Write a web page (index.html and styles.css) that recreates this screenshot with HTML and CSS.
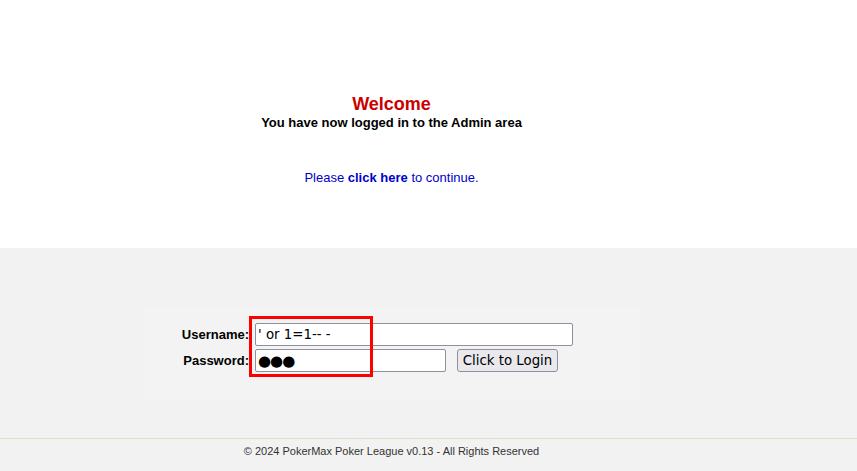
FILE: index.html
```html
<!DOCTYPE html>
<html>
<head>
<meta charset="utf-8">
<title>PokerMax Poker League</title>
<link rel="stylesheet" href="styles.css">
</head>
<body>
<div class="top">
  <div class="wrap">
    <h1 class="welcome">Welcome</h1>
    <p class="subtitle">You have now logged in to the Admin area</p>
    <p class="continue">Please <a href="#" class="link">click here</a> to continue.</p>
  </div>
</div>
<div class="bottom">
  <div class="wrap">
    <form class="login-box">
      <div class="login-grid">
        <label class="label" for="u">Username:</label>
        <input class="field field-user" id="u" type="text" value="' or 1=1-- -">
        <label class="label" for="p">Password:</label>
        <div class="pw-row">
          <input class="field field-pass" id="p" type="text" value="●●●">
          <button class="btn" type="button">Click to Login</button>
        </div>
      </div>
      <div class="highlight"></div>
    </form>
  </div>
  <div class="footer">
    <div class="wrap footer-text">© 2024 PokerMax Poker League v0.13 - All Rights Reserved</div>
  </div>
</div>
</body>
</html>
```
FILE: styles.css
```css
html, body {
  margin: 0;
  padding: 0;
  background: #f2f2f2;
  font-family: "Liberation Sans", Arial, sans-serif;
}
.wrap {
  width: 783px;
}
.top {
  background: #ffffff;
  height: 248px;
  text-align: center;
}
.top .wrap {
  padding-top: 94px;
}
.welcome {
  margin: 0;
  font-size: 18px;
  line-height: 21px;
  color: #cc0000;
  font-weight: bold;
}
.subtitle {
  margin: 0;
  font-size: 13px;
  line-height: 16px;
  font-weight: bold;
  color: #000000;
}
.continue {
  margin: 39px 0 0;
  font-size: 13px;
  line-height: 16px;
  color: #0000cc;
}
.link {
  color: #0000cc;
  font-weight: bold;
  text-decoration: none;
}
.bottom {
  background: #f2f2f2;
  height: 223px;
  padding-top: 59px;
  box-sizing: border-box;
}
.login-box {
  position: relative;
  margin: 0 0 0 143px;
  width: 497px;
  height: 93px;
  background: #f3f3f3;
  box-sizing: border-box;
  padding-top: 16px;
}
.login-grid {
  display: grid;
  grid-template-columns: 106px auto;
  column-gap: 6px;
  row-gap: 3px;
  align-items: center;
}
.label {
  text-align: right;
  font-weight: bold;
  font-size: 13px;
  color: #000;
}
.field {
  height: 23px;
  box-sizing: border-box;
  margin: 0;
  border: 1px solid #8f8f9d;
  border-radius: 2px;
  background: #fff;
  padding: 1px 2px;
  font-family: "DejaVu Sans", sans-serif;
  font-size: 13.33px;
  color: #000;
}
.field-user {
  width: 318px;
}
.field-pass {
  width: 191px;
  font-size: 15px;
  letter-spacing: -1px;
}
.pw-row {
  display: flex;
  align-items: center;
  gap: 11px;
}
.btn {
  height: 23px;
  width: 101px;
  box-sizing: border-box;
  margin: 0;
  padding: 1px 4px;
  border: 1px solid #8f8f9d;
  border-radius: 3px;
  background: #e9e9ed;
  font-family: "DejaVu Sans", sans-serif;
  font-size: 13.33px;
  color: #000;
}
.highlight {
  position: absolute;
  left: 106px;
  top: 9px;
  width: 124px;
  height: 61px;
  box-sizing: border-box;
  border: 3px solid #ff0000;
}
.footer {
  margin-top: 38px;
  border-top: 1px solid #e2dccb;
}
.footer-text {
  text-align: center;
  font-size: 11px;
  line-height: 13px;
  padding-top: 6px;
  color: #333333;
}
```
